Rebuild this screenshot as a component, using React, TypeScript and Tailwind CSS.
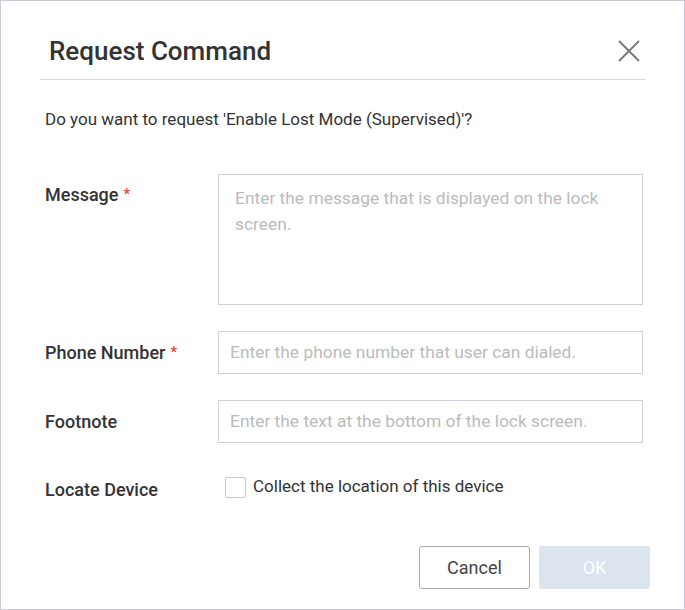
import React from "react";

export default function App() {
  return (
    <div className="w-[685px] h-[610px] bg-white border border-[#c9ccd6] font-['Roboto',sans-serif] text-[#333333] flex flex-col">
      <div className="mx-[39px] h-[79px] pt-[22px] border-b border-[#d6d6e6] flex items-center justify-between pl-[9px] pr-[4px]">
        <h1 className="text-[26px] font-medium leading-none text-[#333]">Request Command</h1>
        <svg width="24" height="24" viewBox="0 0 24 24" className="text-[#777]">
          <path d="M2 2 L22 22 M22 2 L2 22" stroke="currentColor" strokeWidth="1.8" fill="none" />
        </svg>
      </div>
      <p className="mt-[27px] ml-[44px] text-[17px] leading-[24px]">
        Do you want to request 'Enable Lost Mode (Supervised)'?
      </p>
      <div className="ml-[44px] mt-[43px] grid grid-cols-[173px_425px] gap-y-[26px]">
        <div className="h-[41px] flex items-center text-[18px] font-medium">
          Message <span className="ml-[5px] text-[15px] text-[#e8423b]">*</span>
        </div>
        <div className="h-[131px] border border-[#d0d0dc] pl-[16px] pt-[10px] pr-[12px] text-[17.4px] leading-[26px] text-[#bbbbbb]">
          Enter the message that is displayed on the lock screen.
        </div>
        <div className="h-[43px] flex items-center text-[18px] font-medium">
          Phone Number <span className="ml-[5px] text-[15px] text-[#e8423b]">*</span>
        </div>
        <div className="h-[43px] border border-[#d0d0dc] pl-[11px] flex items-center text-[17.4px] text-[#bbbbbb]">
          Enter the phone number that user can dialed.
        </div>
        <div className="h-[43px] flex items-center text-[18px] font-medium">Footnote</div>
        <div className="h-[43px] border border-[#d0d0dc] pl-[11px] flex items-center text-[17.4px] text-[#bbbbbb]">
          Enter the text at the bottom of the lock screen.
        </div>
        <div className="mt-[6px] h-[24px] flex items-center text-[18px] font-medium translate-y-[2px]">Locate Device</div>
        <div className="mt-[6px] h-[24px] flex items-center pl-[7px] text-[17px]">
          <span className="w-[21px] h-[21px] border border-[#c8c8c8] rounded-[2px] mr-[7px]"></span>
          Collect the location of this device
        </div>
      </div>
      <div className="mt-[47px] flex justify-end gap-[9px] pr-[34px]">
        <button className="w-[111px] h-[43px] border border-[#a9a9a9] rounded-[3px] text-[18px] text-[#444] bg-white">
          Cancel
        </button>
        <button className="w-[111px] h-[43px] rounded-[3px] text-[18px] text-white bg-[#dce4f0]">
          OK
        </button>
      </div>
    </div>
  );
}
